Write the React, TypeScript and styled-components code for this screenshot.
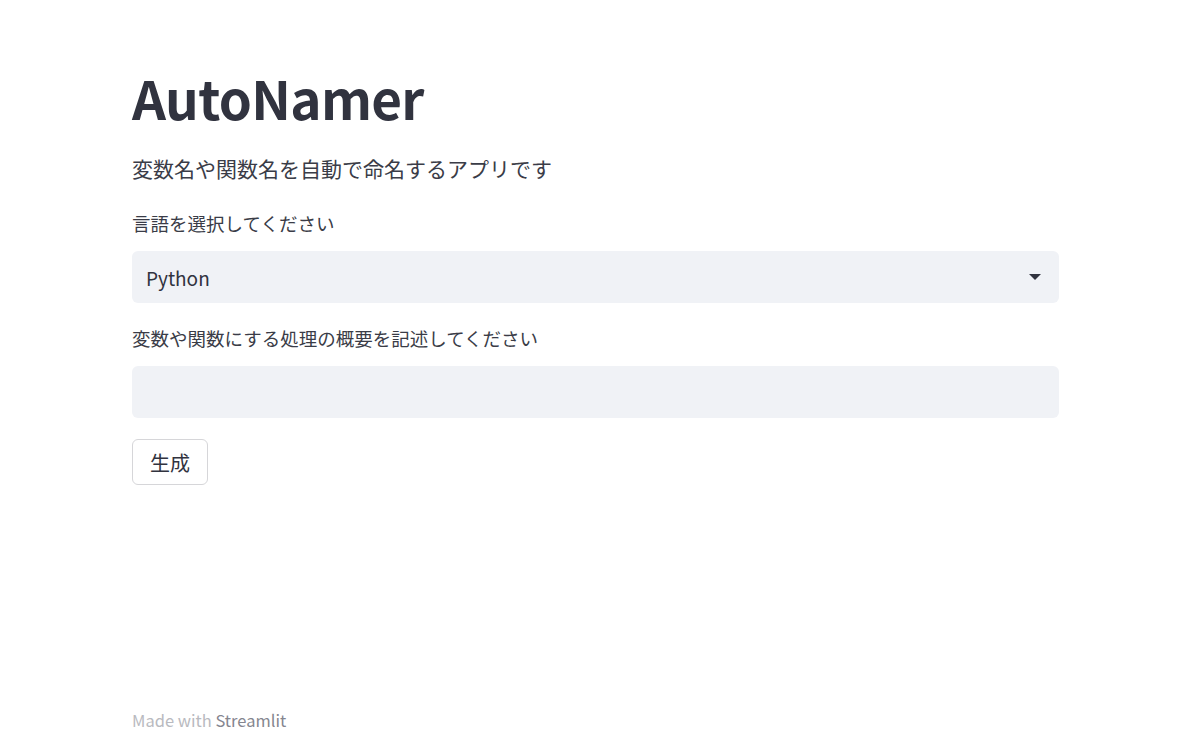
import React from 'react';
import styled, {createGlobalStyle} from 'styled-components';

const GlobalStyle = createGlobalStyle`
    html, body {
        margin: 0;
        padding: 0;
        background: #fff;
    }
    body {
        font-family: "Noto Sans CJK JP", "Noto Sans", sans-serif;
        color: #31333f;
    }
`;

const Page = styled.div`
    min-height: 740px;
    display: flex;
    flex-direction: column;
    padding: 0 141px 0 132px;
    box-sizing: border-box;
`;

const Main = styled.main`
    flex: 1;
    padding-top: 63px;
    display: flex;
    flex-direction: column;
`;

const Title = styled.h1`
    margin: 0;
    font-size: 53px;
    font-weight: 700;
    line-height: 68px;
    letter-spacing: -0.7px;
    color: #31333f;
`;

const Lead = styled.p`
    margin: 22px 0 0;
    font-size: 21px;
    line-height: 30px;
    color: #3a3c47;
`;

const Field = styled.div<{gap: number}>`
    margin-top: ${p => p.gap}px;
    display: flex;
    flex-direction: column;
`;

const Label = styled.label`
    font-size: 18.5px;
    line-height: 26px;
    color: #3a3c47;
    margin-bottom: 15px;
`;

const Box = styled.div`
    height: 52px;
    border-radius: 6px;
    background: #f0f2f6;
    display: flex;
    align-items: center;
    justify-content: space-between;
    padding: 0 18px 0 14px;
    font-size: 19px;
    color: #31333f;
`;

const Caret = styled.span`
    width: 0;
    height: 0;
    border-left: 6px solid transparent;
    border-right: 6px solid transparent;
    border-top: 6px solid #31333f;
`;

const Button = styled.button`
    margin-top: 21px;
    align-self: flex-start;
    height: 46px;
    padding: 0 17px;
    border: 1px solid #d6d6d9;
    border-radius: 6px;
    background: #fff;
    font-family: inherit;
    font-size: 20px;
    color: #31333f;
`;

const Footer = styled.footer`
    padding-bottom: 8px;
    font-size: 16.5px;
    line-height: 24px;
    color: #b9bac0;

    span {
        color: #85868f;
    }
`;

export default function App() {
    return (
        <>
            <GlobalStyle />
            <Page>
                <Main>
                    <Title>AutoNamer</Title>
                    <Lead>変数名や関数名を自動で命名するアプリです</Lead>
                    <Field gap={27}>
                        <Label>言語を選択してください</Label>
                        <Box>
                            Python
                            <Caret />
                        </Box>
                    </Field>
                    <Field gap={22}>
                        <Label>変数や関数にする処理の概要を記述してください</Label>
                        <Box />
                    </Field>
                    <Button>生成</Button>
                </Main>
                <Footer>
                    Made with <span>Streamlit</span>
                </Footer>
            </Page>
        </>
    );
}
